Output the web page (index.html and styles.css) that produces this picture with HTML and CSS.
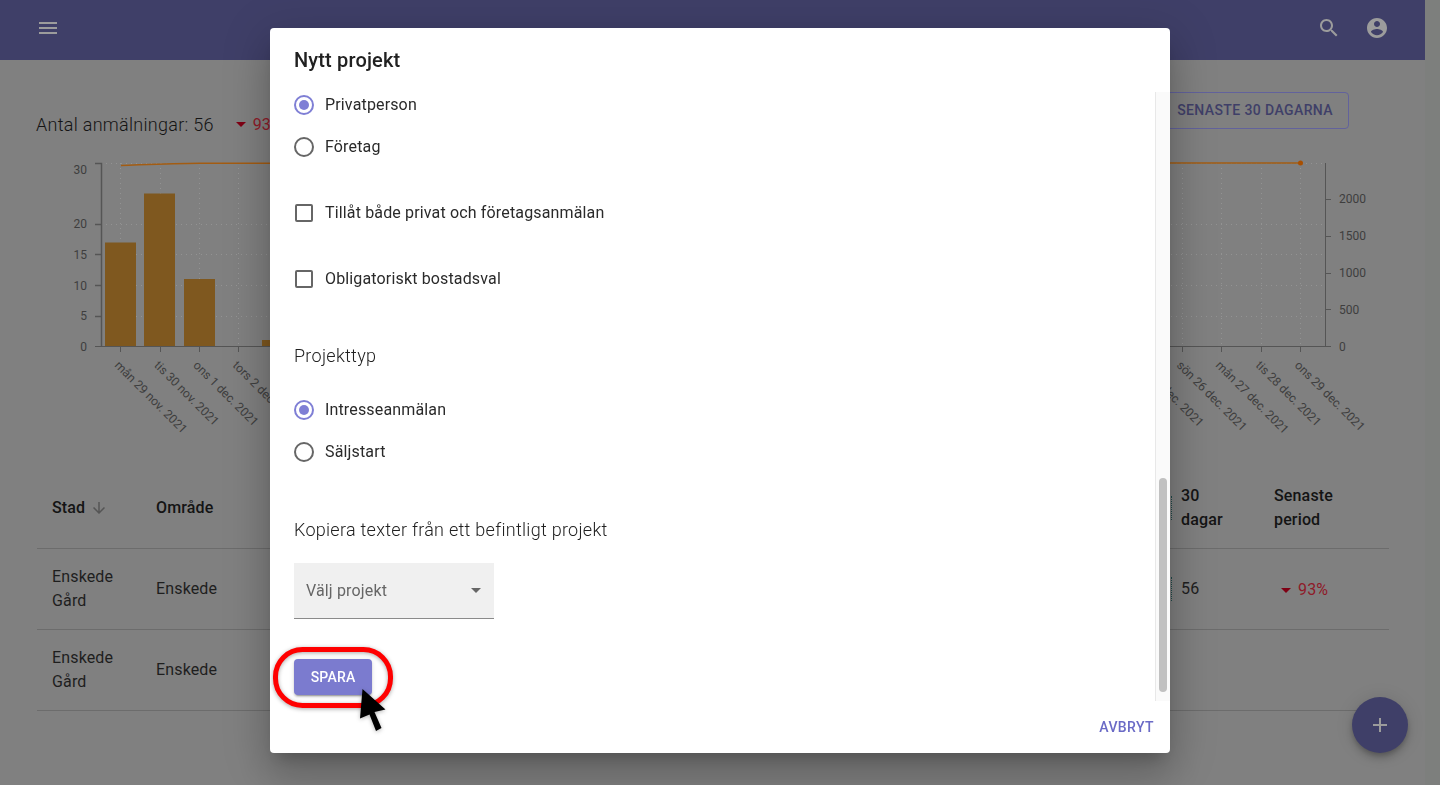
FILE: index.html
```html
<!DOCTYPE html>
<html lang="sv">
<head>
<meta charset="utf-8">
<title>Nytt projekt</title>
<link rel="stylesheet" href="styles.css">
</head>
<body>
<div class="shell">
  <div class="page">
    <header class="appbar">
      <svg class="icon" viewBox="0 0 24 24"><path d="M3 18h18v-2H3v2zm0-5h18v-2H3v2zm0-7v2h18V6H3z"/></svg>
      <div class="appbar-actions">
        <svg class="icon" viewBox="0 0 24 24"><path d="M15.5 14h-.79l-.28-.27C15.41 12.59 16 11.11 16 9.5 16 5.91 13.09 3 9.5 3S3 5.91 3 9.5 5.91 16 9.5 16c1.61 0 3.09-.59 4.23-1.57l.27.28v.79l5 4.99L20.49 19l-4.99-5zm-6 0C7.01 14 5 11.99 5 9.5S7.01 5 9.5 5 14 7.01 14 9.5 11.99 14 9.5 14z"/></svg>
        <svg class="icon" viewBox="0 0 24 24"><path d="M12 2C6.48 2 2 6.48 2 12s4.48 10 10 10 10-4.48 10-10S17.52 2 12 2zm0 3c1.66 0 3 1.34 3 3s-1.34 3-3 3-3-1.34-3-3 1.34-3 3-3zm0 14.2c-2.5 0-4.71-1.28-6-3.22.03-1.99 4-3.08 6-3.08 1.99 0 5.97 1.09 6 3.08-1.29 1.94-3.5 3.22-6 3.22z"/></svg>
      </div>
    </header>
    <main class="content">
      <div class="summary">
        <div class="summary-left">
          <span class="summary-title">Antal anmälningar: 56</span>
          <span class="trend trend-large"><i class="tri"></i>93%</span>
        </div>
        <button class="outline-btn">SENASTE 30 DAGARNA</button>
      </div>
      <svg class="chart" viewBox="0 150 1425 300">
        <g class="grid">
          <line x1="101" y1="163.5" x2="1325" y2="163.5"/>
          <line x1="101" y1="224.5" x2="1325" y2="224.5"/>
          <line x1="101" y1="254.5" x2="1325" y2="254.5"/>
          <line x1="101" y1="285.5" x2="1325" y2="285.5"/>
          <line x1="101" y1="316.5" x2="1325" y2="316.5"/>
          <line x1="120.5" y1="163" x2="120.5" y2="346"/>
          <line x1="160.5" y1="163" x2="160.5" y2="346"/>
          <line x1="199.5" y1="163" x2="199.5" y2="346"/>
          <line x1="238.5" y1="163" x2="238.5" y2="346"/>
          <line x1="1182.5" y1="163" x2="1182.5" y2="346"/>
          <line x1="1221.5" y1="163" x2="1221.5" y2="346"/>
          <line x1="1261.5" y1="163" x2="1261.5" y2="346"/>
          <line x1="1300.5" y1="163" x2="1300.5" y2="346"/>
        </g>
        <g class="bars">
          <rect x="105" y="242.5" width="31" height="103.5"/>
          <rect x="144" y="193.5" width="31" height="152.5"/>
          <rect x="184" y="279" width="31" height="67"/>
          <rect x="262" y="340" width="31" height="6"/>
        </g>
        <path class="trendline" d="M121 165.5 C 150 164.5 170 163.5 200 163.3 L 1300 163"/>
        <circle class="trenddot" cx="1300.5" cy="163" r="2.5"/>
        <g class="axis">
          <path d="M95 163.5H101.5V346.5M95 224.5H101M95 254.5H101M95 285.5H101M95 316.5H101"/>
          <path d="M95 346.5H1331M1325.5 163V346M1325 199.5H1331M1325 236.5H1331M1325 273.5H1331M1325 309.5H1331"/>
          <path d="M120.5 346V352M160.5 346V352M199.5 346V352M238.5 346V352M1143.5 346V352M1182.5 346V352M1221.5 346V352M1261.5 346V352M1300.5 346V352"/>
        </g>
        <g class="tick-l">
          <text x="87" y="174">30</text>
          <text x="87" y="228">20</text>
          <text x="87" y="259">15</text>
          <text x="87" y="290">10</text>
          <text x="87" y="320">5</text>
          <text x="87" y="351">0</text>
        </g>
        <g class="tick-r">
          <text x="1339" y="203">2000</text>
          <text x="1339" y="240">1500</text>
          <text x="1339" y="277">1000</text>
          <text x="1339" y="314">500</text>
          <text x="1339" y="351">0</text>
        </g>
        <g class="dates">
          <text transform="translate(114 366) rotate(45)">mån 29 nov. 2021</text>
          <text transform="translate(153.5 366) rotate(45)">tis 30 nov. 2021</text>
          <text transform="translate(192.5 366) rotate(45)">ons 1 dec. 2021</text>
          <text transform="translate(232 366) rotate(45)">tors 2 dec. 2021</text>
          <text transform="translate(1137 366) rotate(45)">lör 25 dec. 2021</text>
          <text transform="translate(1176 366) rotate(45)">sön 26 dec. 2021</text>
          <text transform="translate(1215 366) rotate(45)">mån 27 dec. 2021</text>
          <text transform="translate(1255 366) rotate(45)">tis 28 dec. 2021</text>
          <text transform="translate(1294 366) rotate(45)">ons 29 dec. 2021</text>
        </g>
      </svg>
      <table class="projects">
        <colgroup>
          <col class="col-city"><col class="col-area"><col class="col-fill"><col class="col-days"><col class="col-period">
        </colgroup>
        <thead>
          <tr>
            <th>Stad <svg class="sort" viewBox="0 0 24 24"><path d="M20 12l-1.41-1.41L13 16.17V4h-2v12.17l-5.58-5.59L4 12l8 8 8-8z"/></svg></th>
            <th>Område</th>
            <th class="spark-cell"><i class="spark"></i></th>
            <th>30 dagar</th>
            <th>Senaste period</th>
          </tr>
        </thead>
        <tbody>
          <tr>
            <td>Enskede Gård</td>
            <td>Enskede</td>
            <td class="spark-cell"><i class="spark"></i></td>
            <td>56</td>
            <td><span class="trend trend-cell"><i class="tri"></i>93%</span></td>
          </tr>
          <tr>
            <td>Enskede Gård</td>
            <td>Enskede</td>
            <td></td>
            <td></td>
            <td></td>
          </tr>
        </tbody>
      </table>
    </main>
  </div>
  <div class="page-scrollbar"></div>
</div>

<button class="fab" aria-label="Lägg till">
  <svg viewBox="0 0 24 24"><path d="M19 13h-6v6h-2v-6H5v-2h6V5h2v6h6v2z"/></svg>
</button>

<section class="dialog">
  <h2 class="dialog-title">Nytt projekt</h2>
  <div class="dialog-middle">
    <div class="dialog-body">
      <label class="option"><span class="radio on"></span>Privatperson</label>
      <label class="option option-near"><span class="radio"></span>Företag</label>
      <label class="option option-far"><span class="check"></span>Tillåt både privat och företagsanmälan</label>
      <label class="option option-far"><span class="check"></span>Obligatoriskt bostadsval</label>
      <h3 class="section-title">Projekttyp</h3>
      <label class="option option-after-title"><span class="radio on"></span>Intresseanmälan</label>
      <label class="option option-near"><span class="radio"></span>Säljstart</label>
      <h3 class="section-title section-title-copy">Kopiera texter från ett befintligt projekt</h3>
      <div class="select"><span>Välj projekt</span><i class="select-arrow"></i></div>
      <button class="save-btn">SPARA</button>
    </div>
    <div class="dialog-scroll"><div class="dialog-thumb"></div></div>
  </div>
  <div class="dialog-actions"><button class="text-btn">AVBRYT</button></div>
  <svg class="annotation" viewBox="270 28 900 725">
    <rect class="ring" x="275.5" y="649.5" width="115" height="56" rx="27"/>
    <path class="cursor" d="M362.5 689L385.5 709.5L374.5 712L381.5 728L376 731L369.5 714.5L360 718.5Z"/>
  </svg>
</section>
</body>
</html>
```
FILE: styles.css
```css
* { box-sizing: border-box; }
html, body { margin: 0; height: 785px; overflow: hidden; }
body { font-family: Roboto, "Liberation Sans", sans-serif; color: #1c1c1c; background: #808080; }

.shell { display: flex; height: 785px; }
.page { width: 1425px; flex: none; }
.page-scrollbar { flex: 1; background: #7d7f7d; }

.appbar { height: 60px; background: #3f3f68; display: flex; justify-content: space-between; padding: 16px 36px 0; }
.appbar-actions { display: flex; gap: 24px; }
.icon { width: 24px; height: 24px; fill: #9c9c9c; display: block; }

.content { padding-top: 32px; }
.summary { display: flex; justify-content: space-between; align-items: flex-end; padding: 0 76px 0 36px; height: 37px; }
.summary-left { display: flex; align-items: center; margin-bottom: -6px; }
.summary-title { font-size: 18px; font-weight: 300; letter-spacing: .28px; color: #141414; }
.trend { display: inline-flex; align-items: center; color: #8f1a28; }
.trend-large { font-size: 16px; margin-left: 22px; }
.trend-cell { font-size: 16px; margin-left: 7px; }
.tri { width: 0; height: 0; border-left: 5px solid transparent; border-right: 5px solid transparent; border-top: 5px solid #7f0014; margin-right: 7px; display: block; }
.outline-btn { font: 500 14px Roboto, sans-serif; letter-spacing: .4px; height: 37px; padding: 0 15px 1px; background: transparent; color: #3f3f68; border: 1px solid #62629c; border-radius: 4px; }

.chart { display: block; width: 1425px; height: 300px; margin-top: 21px; }
.grid line { stroke: #939393; stroke-width: 1; stroke-dasharray: 1 4; }
.bars rect { fill: #7f581f; }
.trendline { fill: none; stroke: #a35c12; stroke-width: 1.5; }
.trenddot { fill: #a84f00; }
.axis path { fill: none; stroke: #555; stroke-width: 1; }
.axis path:first-child { stroke-width: 1.5; }
.tick-l text, .tick-r text, .dates text { font: 12px Roboto, sans-serif; fill: #3e3e3e; }
.tick-l text { text-anchor: end; }
.dates text { font-size: 12.2px; }

.projects { width: 1352px; margin: 18px 0 0 37px; border-collapse: collapse; table-layout: fixed; font-size: 16px; line-height: 24px; letter-spacing: .15px; }
.col-city { width: 104px; }
.col-area { width: 100px; }
.col-days { width: 87px; }
.col-period { width: 130px; }
.projects th, .projects td { padding: 16px 15px; border-bottom: 1px solid #6c6c6c; text-align: left; font-weight: 400; color: #1e1e1e; }
.projects th { font-weight: 500; color: #141414; height: 80px; }
.projects td { height: 81px; }
.projects th.spark-cell, .projects td.spark-cell { padding-right: 0; text-align: right; }
.projects th:nth-child(4), .projects td:nth-child(4) { padding-left: 9px; padding-right: 16px; }
.spark { display: inline-block; width: 1px; height: 24px; border-left: 1px dotted #1f4a4a; vertical-align: middle; }
.sort { width: 18px; height: 18px; fill: #555; vertical-align: -4px; margin-left: 1px; }

.fab { position: fixed; left: 1352px; top: 697px; width: 56px; height: 56px; border: 0; border-radius: 50%; padding: 16px; background: #3f3f68; box-shadow: 0 3px 5px -1px rgba(0,0,0,.2), 0 6px 10px 0 rgba(0,0,0,.14), 0 1px 18px 0 rgba(0,0,0,.12); }
.fab svg { display: block; width: 24px; height: 24px; fill: #9c9c9c; }

.dialog { position: fixed; left: 270px; top: 28px; width: 900px; height: 725px; background: #fff; border-radius: 4px; display: flex; flex-direction: column; box-shadow: 0 11px 15px -7px rgba(0,0,0,.2), 0 24px 38px 3px rgba(0,0,0,.14), 0 9px 46px 8px rgba(0,0,0,.12); }
.dialog-title { margin: 0; height: 64px; padding: 20px 24px 0; font-size: 20px; line-height: 24px; font-weight: 500; letter-spacing: .15px; color: #212121; flex: none; }
.dialog-middle { display: flex; height: 609px; flex: none; overflow: hidden; }
.dialog-body { flex: 1; padding: 1px 24px 0; }
.dialog-scroll { width: 15px; flex: none; background: #fafafa; border-left: 1px solid #e8e8e8; padding: 386px 3px 0 3px; }
.dialog-thumb { height: 214px; background: #c1c1c1; border-radius: 4px; }
.dialog-actions { flex: 1; display: flex; justify-content: flex-end; align-items: center; padding-right: 16px; }
.text-btn { font: 500 14px Roboto, sans-serif; letter-spacing: .4px; background: none; border: 0; padding: 0; color: #6a6ac6; }

.option { display: flex; align-items: center; height: 24px; padding-bottom: 2px; font-size: 16px; letter-spacing: .15px; color: #2a2a2a; }
.option-near { margin-top: 18px; }
.option-far { margin-top: 42px; }
.option-after-title { margin-top: 30px; }
.radio { width: 20px; height: 20px; margin-top: 2px; border: 2px solid #666; border-radius: 50%; margin-right: 11px; flex: none; display: flex; align-items: center; justify-content: center; }
.radio.on { border-color: #7f7fd5; }
.radio.on::after { content: ""; width: 10px; height: 10px; border-radius: 50%; background: #7f7fd5; }
.check { width: 18px; height: 18px; margin: 2px 12px 0 1px; border: 2px solid #666; border-radius: 2px; flex: none; }
.section-title { margin: 53px 0 0; font-size: 18px; line-height: 24px; font-weight: 300; letter-spacing: .28px; color: #212121; }
.section-title-copy { margin-top: 54px; }
.section-title + .select { margin-top: 21px; }
.select { width: 200px; height: 56px; background: #f0f0f0; border-bottom: 1px solid #8a8a8a; display: flex; align-items: center; justify-content: space-between; padding: 0 13px 0 12px; font-size: 16px; letter-spacing: .15px; color: #666; }
.select-arrow { width: 0; height: 0; border-left: 5px solid transparent; border-right: 5px solid transparent; border-top: 5px solid #666; }
.save-btn { display: block; margin-top: 40px; width: 78px; height: 36px; border: 0; border-radius: 4px; background: #7b7bcf; color: #fff; font: 500 14px Roboto, sans-serif; letter-spacing: .2px; box-shadow: 0 3px 1px -2px rgba(0,0,0,.2), 0 2px 2px 0 rgba(0,0,0,.14), 0 1px 5px 0 rgba(0,0,0,.12); }

.annotation { position: absolute; left: 0; top: 0; width: 900px; height: 725px; pointer-events: none; }
.ring { fill: none; stroke: #f00; stroke-width: 5; filter: drop-shadow(0 1px 2px rgba(0,0,0,.35)); }
.cursor { fill: #000; filter: drop-shadow(0 1px 2px rgba(0,0,0,.3)); }
```
